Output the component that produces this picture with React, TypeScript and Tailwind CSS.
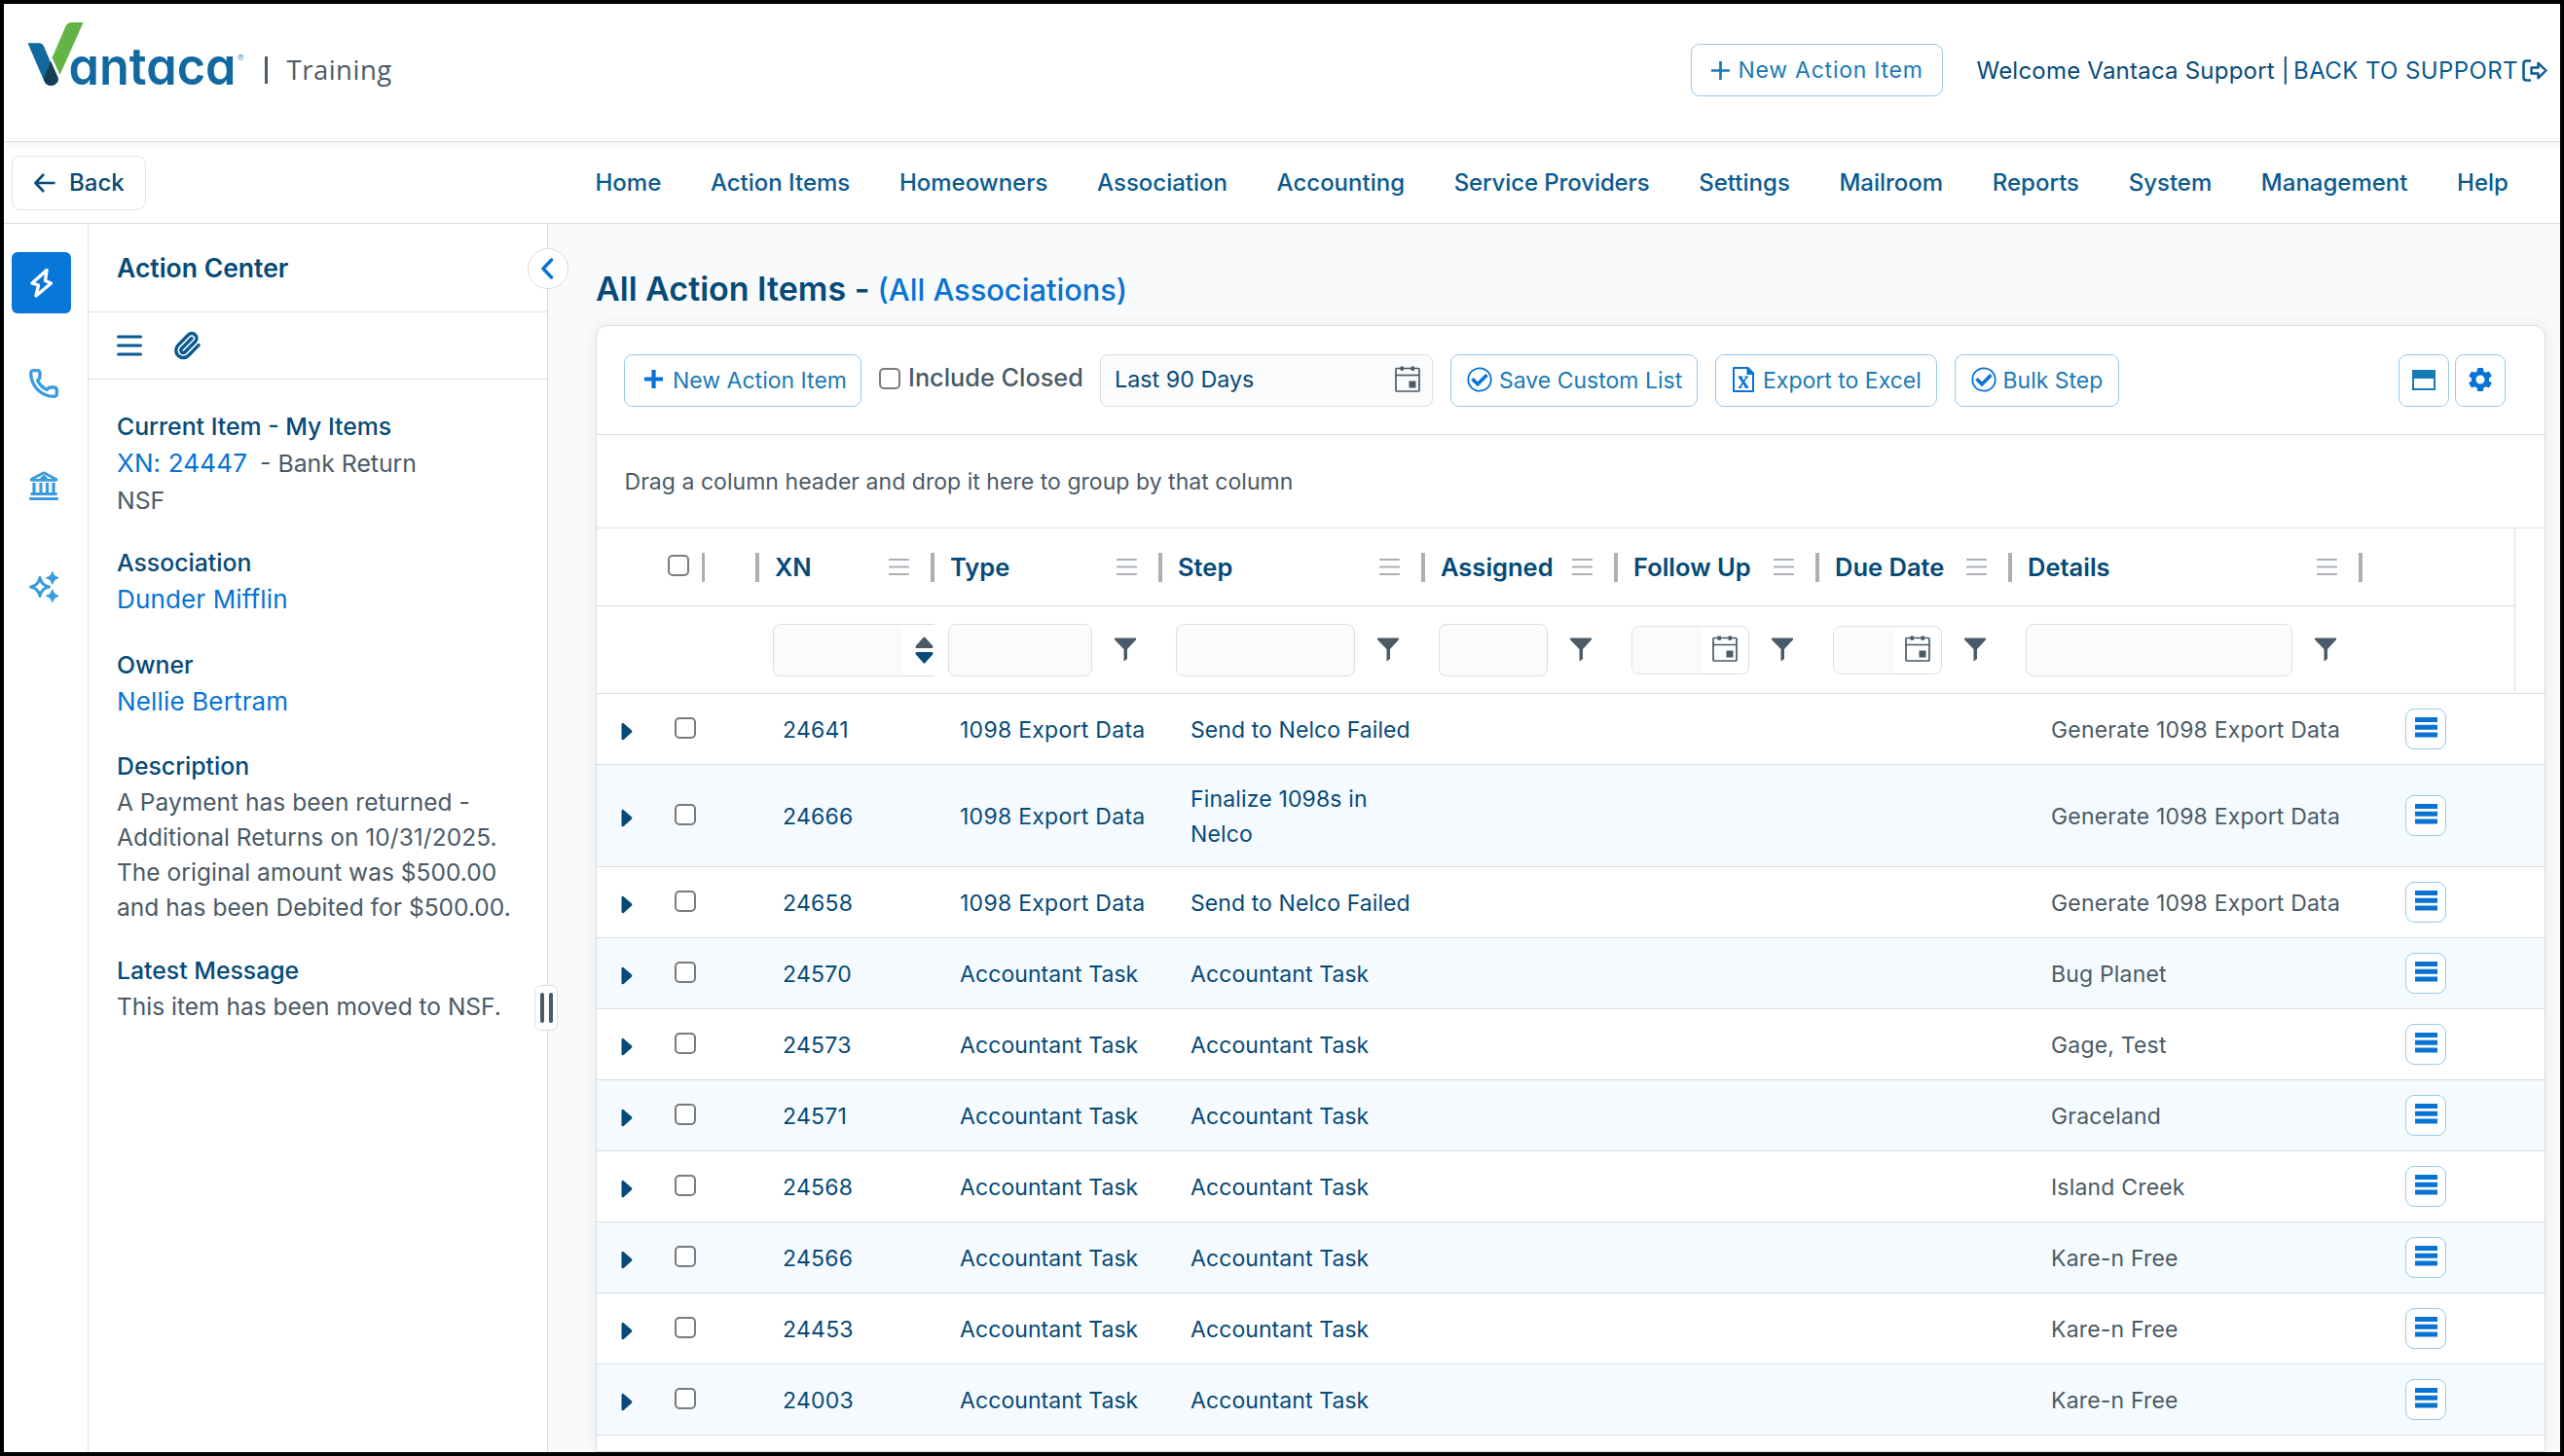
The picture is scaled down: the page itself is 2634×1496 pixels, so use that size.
import React from "react";
import { Paperclip, Phone } from "lucide-react";
import { MdSettings } from "react-icons/md";

const navItems = [
  "Home", "Action Items", "Homeowners", "Association", "Accounting", "Service Providers",
  "Settings", "Mailroom", "Reports", "System", "Management", "Help",
];

type Row = { xn: string; type: string; step: string; details: string };

const rows: Row[] = [
  { xn: "24641", type: "1098 Export Data", step: "Send to Nelco Failed", details: "Generate 1098 Export Data" },
  { xn: "24666", type: "1098 Export Data", step: "Finalize 1098s in Nelco", details: "Generate 1098 Export Data" },
  { xn: "24658", type: "1098 Export Data", step: "Send to Nelco Failed", details: "Generate 1098 Export Data" },
  { xn: "24570", type: "Accountant Task", step: "Accountant Task", details: "Bug Planet" },
  { xn: "24573", type: "Accountant Task", step: "Accountant Task", details: "Gage, Test" },
  { xn: "24571", type: "Accountant Task", step: "Accountant Task", details: "Graceland" },
  { xn: "24568", type: "Accountant Task", step: "Accountant Task", details: "Island Creek" },
  { xn: "24566", type: "Accountant Task", step: "Accountant Task", details: "Kare-n Free" },
  { xn: "24453", type: "Accountant Task", step: "Accountant Task", details: "Kare-n Free" },
  { xn: "24003", type: "Accountant Task", step: "Accountant Task", details: "Kare-n Free" },
];

const gridCols = "grid grid-cols-[111px_56px_180px_234px_270px_198px_207px_198px_360px_1fr]";

function Logo() {
  return (
    <svg width="232" height="100" viewBox="20 22 232 100" className="shrink-0">
      <path d="M28.500 44.300H40.500Q43.600 44.300 44.800 47L60 83Q57.500 88 52.200 88Q47 88 45 82.500Z" fill="#11699f" />
      <path d="M52.300 63L60 80.500Q58 88 52.200 88Q44.500 87 45.200 79.500Z" fill="#163d50" />
      <path d="M73.500 23H85.600L61.600 76.800L53.500 59.500L67.500 27Q69.500 23 73.500 23Z" fill="#64b346" />
      <path d="M52.800 60.500L61 78" stroke="#fff" strokeWidth="1" />
      <text x="70.500" y="87.300" textLength="172" lengthAdjust="spacingAndGlyphs" fill="#11699f" className="font-['Inter'] text-[53px] font-semibold [font-feature-settings:'cv11']">antaca</text>
      <text x="244" y="62.500" fill="#5d9bc4" className="font-['Inter'] text-[9.500px]">®</text>
    </svg>
  );
}

function Plus({ size, stroke }: { size: number; stroke: number }) {
  return (
    <svg width={size} height={size} viewBox="0 0 18 18" className="shrink-0">
      <path d="M9 0V18M0 9H18" stroke="currentColor" strokeWidth={stroke} />
    </svg>
  );
}

function CheckCircle() {
  return (
    <svg width="26" height="26" viewBox="0 0 26 26" className="-mt-0.5 shrink-0 text-[#0873d3]" fill="none">
      <circle cx="13" cy="13" r="11.700" stroke="currentColor" strokeWidth="1.800" />
      <path d="M5.500 12.200L11 17.700L20.500 8.200" stroke="currentColor" strokeWidth="3.600" />
    </svg>
  );
}

function ExcelIcon() {
  return (
    <svg width="22" height="26" viewBox="0 0 22 26" className="-mt-0.5 shrink-0 text-[#0873d3]" fill="none">
      <path d="M15 1H1V25H21V7Z" stroke="currentColor" strokeWidth="2" strokeLinejoin="round" />
      <path d="M14.500 0H16L22 6V8H14.500Z" fill="currentColor" />
      <path d="M7.300 10.200L14.700 21" stroke="currentColor" strokeWidth="2.800" />
      <path d="M14.700 10.200L7.300 21M5.800 10.200H9.800M12.500 10.200H16M5.800 21H9.500M12.300 21H16.300" stroke="currentColor" strokeWidth="1.500" />
    </svg>
  );
}

function CalendarIcon() {
  return (
    <svg width="26" height="27" viewBox="0 0 26 27" className="-mt-0.5 shrink-0 text-[#4a5a66]" fill="none">
      <rect x="1" y="2.500" width="24" height="23.500" rx="1" stroke="currentColor" strokeWidth="1.700" />
      <path d="M1 9.500H25" stroke="currentColor" strokeWidth="1.700" />
      <path d="M5.500 0.500H9V4.700H5.500ZM16.500 0.500H20V4.700H16.500ZM14.500 15.500H21.500V22.500H14.500Z" fill="currentColor" />
    </svg>
  );
}

function Funnel() {
  return (
    <svg width="22" height="25" viewBox="0 0 22 25" className="shrink-0" fill="#4a5a66">
      <path d="M0 0.500H22V2.200L13 12V22L9.500 24.500V12L0 2.200Z" />
    </svg>
  );
}

function HeaderMenu() {
  return (
    <svg width="21" height="19" viewBox="0 0 21 19" className="shrink-0">
      <path d="M1 2H20M1 9.500H20M1 17H20" stroke="#a7b0b7" strokeWidth="2.200" strokeLinecap="round" />
    </svg>
  );
}

function Checkbox() {
  return <span className="block size-[22px] shrink-0 rounded-[5px] border-2 border-[#7b7b7b] bg-white" />;
}

function OutlineButton({ className, children }: { className: string; children: React.ReactNode }) {
  return (
    <button className={"flex h-[54px] shrink-0 items-center whitespace-nowrap rounded-[9px] border border-[#97caec] bg-white text-[#1a7ab6] " + className}>
      {children}
    </button>
  );
}

function ColumnHeader({ label }: { label: string }) {
  return (
    <div className="flex items-center pl-4">
      <span className="flex-1 whitespace-nowrap pt-0.5 text-[25.500px] font-semibold text-[#064a78]">{label}</span>
      <HeaderMenu />
      <span className="ml-[22px] h-[30px] w-1 bg-[#a9b1b8]" />
    </div>
  );
}

function TextFilter() {
  return (
    <div className="flex items-center pl-[14px]">
      <span className="h-[54px] flex-1 rounded-lg border border-[#dadee3] bg-[#fafbfd]" />
      <span className="ml-[23px] mr-[27px]"><Funnel /></span>
    </div>
  );
}

function DateFilter() {
  return (
    <div className="flex items-center pl-[14px]">
      <span className="flex h-[50px] flex-1 overflow-hidden rounded-lg border border-[#dadee3] bg-white">
        <span className="flex-1 bg-[#fafbfd]" />
        <span className="flex w-12 items-center justify-center"><CalendarIcon /></span>
      </span>
      <span className="ml-[23px] mr-[27px]"><Funnel /></span>
    </div>
  );
}

function GridRow({ row, index }: { row: Row; index: number }) {
  const tall = index === 1;
  return (
    <div className={gridCols + " shrink-0 items-center border-b border-[#d9dee3] text-[23px] leading-9 text-[#064a78] " + (tall ? "h-[105px] " : "h-[73px] ") + (index % 2 ? "bg-[#f5fafe]" : "bg-white")}>
      <div className="flex items-center pl-[25px]">
        <svg width="12" height="19" viewBox="0 0 12 19" className="mt-1 shrink-0">
          <path d="M0.500 2Q1.500 0 3 1.500L11 8.500Q11.800 9.500 11 10.500L3 17.800Q1.500 19 0.500 17.500Z" fill="#064a78" />
        </svg>
        <span className="-mt-[3px] ml-[43px]"><Checkbox /></span>
      </div>
      <div />
      <div className="pl-6 pt-px tracking-[0.250px]">{row.xn}</div>
      <div className={"whitespace-nowrap pl-[26px] pt-px " + (index < 3 ? "tracking-[0.270px]" : "tracking-[0.080px]")}>{row.type}</div>
      <div className={"pl-[29px] pt-px " + (index === 1 ? "pr-[41px] tracking-[0.150px]" : "whitespace-nowrap tracking-[0.080px]")}>{row.step}</div>
      <div />
      <div />
      <div />
      <div className="whitespace-nowrap pl-10 pt-px tracking-[0.180px] text-[#4a5a66]">{row.details}</div>
      <div className="pl-11">
        <button className="flex size-[42px] items-start justify-center rounded-[9px] border border-[#97caec] bg-white pt-[7px]">
          <svg width="23" height="22" viewBox="0 0 23 22">
            <path d="M0 3.500H23M0 11.200H23M0 19H23" stroke="#0873d3" strokeWidth="5" />
          </svg>
        </button>
      </div>
    </div>
  );
}

export default function App() {
  return (
    <div className="flex h-[1496px] w-[2634px] flex-col overflow-hidden border-4 border-black bg-white font-['Inter',sans-serif] text-[#4a5a66]">
      <header className="flex h-[142px] shrink-0 items-center border-b border-[#d6dce1] pb-[5px] pl-4 pr-[13px]">
        <Logo />
        <span className="ml-5 h-7 w-[2.500px] bg-[#4a5a66]" />
        <span className="ml-[20px] font-['Open_Sans',sans-serif] text-[27.500px] leading-none tracking-[0.500px]">Training</span>
        <OutlineButton className="ml-auto w-[259px] pl-5 text-[23px] tracking-[0.750px]">
          <Plus size={19} stroke={2.600} />
          <span className="ml-2">New Action Item</span>
        </OutlineButton>
        <span className="ml-[34px] whitespace-nowrap pt-px text-[24px] tracking-[0.220px] text-[#064a78]">Welcome Vantaca Support |</span>
        <span className="ml-1 whitespace-nowrap pt-px text-[24px] tracking-[0.400px] text-[#0b5a8f]">BACK TO SUPPORT</span>
        <svg width="26" height="23" viewBox="0 0 26 23" className="ml-1 shrink-0 text-[#0b5a8f]" fill="none">
          <path d="M9 1.500H4.500Q1.500 1.500 1.500 4.500V18.500Q1.500 21.500 4.500 21.500H9" stroke="currentColor" strokeWidth="2.600" />
          <path d="M9.500 8.500H16.500V3.800L24.500 11.500L16.500 19.200V14.500H9.500Z" stroke="currentColor" strokeWidth="2.400" strokeLinejoin="round" />
        </svg>
      </header>

      <nav className="flex h-[84px] shrink-0 items-center border-b border-[#d6dce1] bg-linear-to-b from-[#f6f9fc] to-white to-[12px] pl-2 pr-[53px]">
        <button className="flex h-[56px] w-[138px] shrink-0 items-center rounded-[9px] border border-[#dbe5ec] bg-white pl-[22px] text-[24px] font-medium text-[#064a78]">
          <svg width="22" height="20" viewBox="0 0 22 20" fill="none">
            <path d="M10 1L1.500 10L10 19M1.500 10H21.500" stroke="currentColor" strokeWidth="2.600" strokeLinejoin="round" />
          </svg>
          <span className="ml-[14px]">Back</span>
        </button>
        <div className="ml-[461.500px] flex flex-1 items-center justify-between whitespace-nowrap text-[24px] font-medium text-[#0b5a8f]">
          {navItems.map((item) => (
            <a key={item} className={item === "Service Providers" ? "tracking-[-0.100px]" : ""}>{item}</a>
          ))}
        </div>
      </nav>

      <div className="flex min-h-0 flex-1">
        <aside className="flex w-[87px] shrink-0 flex-col border-r border-[#dcdfe3] pl-2 pt-[29px] text-[#3a9bdc]">
          <div className="flex h-[63px] w-[61px] items-center justify-center rounded-md bg-[#0877da]">
            <svg width="26" height="32" viewBox="0 0 26 32" fill="none">
              <path d="M18 2.500L3 16L9.500 18L7 29L22.500 16L16.500 13.500Z" stroke="#fff" strokeWidth="3.400" strokeLinejoin="round" />
            </svg>
          </div>
          <div className="mt-[56px] flex w-[65px] flex-col items-center">
            <Phone size={32} strokeWidth={2.500} />
            <svg width="30" height="32" viewBox="0 0 30 32" fill="none" className="mt-[73px]">
              <path d="M2.200 9.500L15 2.800L27.800 9.500V10.300H2.200Z" stroke="currentColor" strokeWidth="2.800" strokeLinejoin="round" />
              <path d="M12 8.500L15 5.500L18 8.500Z" fill="currentColor" stroke="currentColor" strokeWidth="1.500" />
              <path d="M5 13V25M12 13V25M18.500 13V25M25 13V25" stroke="currentColor" strokeWidth="3.200" />
              <path d="M2.500 24.500H27.500M1 29.500H29" stroke="currentColor" strokeWidth="2.800" strokeLinecap="round" />
            </svg>
            <svg width="30" height="32" viewBox="0 0 30 32" fill="none" className="mt-[72px]">
              <path d="M11 6.500Q12.500 14.500 20.500 16Q12.500 17.500 11 25.500Q9.500 17.500 1.500 16Q9.500 14.500 11 6.500Z" stroke="currentColor" strokeWidth="3" strokeLinejoin="round" />
              <path d="M23.800 1Q24.800 5.800 29.600 6.800Q24.800 7.800 23.800 12.600Q22.800 7.800 18 6.800Q22.800 5.800 23.800 1ZM23.800 19.500Q24.800 24.300 29.600 25.300Q24.800 26.300 23.800 31.100Q22.800 26.300 18 25.300Q22.800 24.300 23.800 19.500Z" fill="currentColor" stroke="currentColor" strokeWidth="1.600" strokeLinejoin="round" />
            </svg>
          </div>
        </aside>

        <section className="relative flex w-[472px] shrink-0 flex-col border-r border-[#d6dade]">
          <div className="flex h-[91px] items-center border-b border-[#dcdfe3] pl-[29px] pt-0.5 text-[26.500px] font-semibold text-[#064a78]">Action Center</div>
          <div className="flex h-[69px] items-center border-b border-[#dcdfe3] pl-[29px] text-[#0b5a8f]">
            <svg width="26" height="22" viewBox="0 0 26 22">
              <path d="M1.500 2H24.500M1.500 11H24.500M1.500 20H24.500" stroke="currentColor" strokeWidth="3" strokeLinecap="round" />
            </svg>
            <Paperclip size={30} strokeWidth={2.700} className="ml-[31px]" />
          </div>
          <div className="flex flex-col pl-[29px] pt-[29.500px] text-[24.800px] leading-[38px]">
            <h3 className="font-medium leading-[37px] text-[#064a78]">Current Item - My Items</h3>
            <p className="w-[330px]"><span className="text-[26px] tracking-[0.150px] text-[#0873d3]">XN: 24447</span><span className="ml-[13px]">- Bank Return</span><br />NSF</p>
            <h3 className="mt-[27px] font-medium leading-[37px] text-[#064a78]">Association</h3>
            <p className="text-[26px] tracking-[0.150px] text-[#0873d3]">Dunder Mifflin</p>
            <h3 className="mt-[30px] font-medium leading-[37px] text-[#064a78]">Owner</h3>
            <p className="text-[26px] tracking-[0.150px] text-[#0873d3]">Nellie Bertram</p>
            <h3 className="mt-[29px] font-medium leading-[37px] text-[#064a78]">Description</h3>
            <p className="w-[420px] text-[24.500px] leading-9 tracking-[0.030px]">
              A Payment has been returned - Additional Returns on 10/31/2025. The original amount was $500.00 and has been Debited for $500.00.
            </p>
            <h3 className="mt-[29px] font-medium leading-[37px] text-[#064a78]">Latest Message</h3>
            <p className="whitespace-nowrap text-[24.500px] leading-9">This item has been moved to NSF.</p>
          </div>
          <button className="absolute -right-[22px] top-[25px] z-10 flex size-[42px] items-center justify-center rounded-full border border-[#d9dde1] bg-white pr-0.5">
            <svg width="14" height="22" viewBox="0 0 14 22" fill="none">
              <path d="M11.500 2L3 11L11.500 20" stroke="#0873d3" strokeWidth="3.400" strokeLinecap="round" strokeLinejoin="round" />
            </svg>
          </button>
          <div className="absolute -right-[11px] top-[782px] z-10 flex h-[47px] w-6 items-center justify-center gap-[5px] rounded-[7px] border border-[#d9dde1] bg-white">
            <span className="h-[31px] w-1 rounded-full bg-[#4a5a66]" />
            <span className="h-[31px] w-1 rounded-full bg-[#4a5a66]" />
          </div>
        </section>

        <main className="flex min-w-0 flex-1 flex-col bg-[#f8fafc] pl-[49px] pr-[15px]">
          <h1 className="flex h-[104px] shrink-0 items-baseline pt-[46px] text-[34px] font-semibold leading-[42px] text-[#064a78]">
            All Action Items -<span className="ml-2 text-[30.800px] font-medium text-[#0873d3]">(All Associations)</span>
          </h1>
          <div className="flex h-[1170px] flex-col rounded-t-[12px] border border-[#d9dde2] bg-white shadow-[0_0_16px_rgba(0,0,0,0.07)]">
            <div className="flex h-[112px] shrink-0 items-center border-b border-[#d9dde2] pl-7 pr-[40px] text-[23px]">
              <OutlineButton className="w-[244px] pl-5">
                <span className="-mt-0.5 text-[#0873d3]"><Plus size={19} stroke={4} /></span>
                <span className="ml-2.5 pt-px">New Action Item</span>
              </OutlineButton>
              <span className="-mt-1 ml-[18px]"><Checkbox /></span>
              <span className="-mt-[5px] ml-2 w-[197px] whitespace-nowrap text-[25.300px] font-medium">Include Closed</span>
              <div className="flex h-[54px] w-[342px] shrink-0 items-center justify-between rounded-lg border border-[#dadee3] bg-[#fafbfd] pl-[14px] pr-3 text-[23.300px] text-[#064a78]">
                Last 90 Days
                <CalendarIcon />
              </div>
              <OutlineButton className="ml-[18px] w-[254px] pl-4"><CheckCircle /><span className="ml-[7px] pt-px">Save Custom List</span></OutlineButton>
              <OutlineButton className="ml-[18px] w-[228px] pl-[17px]"><ExcelIcon /><span className="ml-[9px] pt-px">Export to Excel</span></OutlineButton>
              <OutlineButton className="ml-[18px] w-[169px] pl-4"><CheckCircle /><span className="ml-[6.500px] pt-px">Bulk Step</span></OutlineButton>
              <OutlineButton className="ml-auto w-[52px] justify-center">
                <svg width="24" height="21" viewBox="0 0 24 21" fill="none">
                  <rect x="1" y="1" width="22" height="19" stroke="currentColor" strokeWidth="2" />
                  <path d="M0 0H24V9H0Z" fill="currentColor" />
                </svg>
              </OutlineButton>
              <OutlineButton className="ml-1.5 w-[52px] justify-center"><MdSettings size={30} className="-mt-px text-[#0873d3]" /></OutlineButton>
            </div>
            <div className="flex h-[96px] shrink-0 items-center border-b border-[#d9dde2] pl-[28.500px] pt-0.5 text-[23px] tracking-[0.040px]">
              Drag a column header and drop it here to group by that column
            </div>

            <div className="flex h-[170px] shrink-0 border-b border-[#d9dde2]">
              <div className="flex w-[1971px] flex-col border-r border-[#d9dde2]">
                <div className={gridCols + " h-20 items-center border-b border-[#d9dde2]"}>
                  <div className="flex items-center justify-end">
                    <span className="-mt-[3px] mr-[13px]"><Checkbox /></span>
                    <span className="h-[30px] w-[3px] bg-[#a9b1b8]" />
                  </div>
                  <div className="flex justify-end"><span className="h-[30px] w-1 bg-[#a9b1b8]" /></div>
                  <ColumnHeader label="XN" />
                  <ColumnHeader label="Type" />
                  <ColumnHeader label="Step" />
                  <ColumnHeader label="Assigned" />
                  <ColumnHeader label="Follow Up" />
                  <ColumnHeader label="Due Date" />
                  <ColumnHeader label="Details" />
                  <div />
                </div>
                <div className={gridCols + " h-[89px] items-center"}>
                  <div />
                  <div />
                  <div className="pl-[14px]">
                    <div className="flex h-[54px] items-center overflow-hidden rounded-l-lg border border-r-0 border-[#dadee3]">
                      <span className="h-full flex-1 bg-[#fafbfd]" />
                      <span className="flex w-[34px] justify-end pr-px">
                        <svg width="19" height="28" viewBox="0 0 19 28">
                          <path d="M8.500 1Q9.500 0 10.500 1L18.500 10Q18.500 12 17.500 12H1.500Q0.500 12 0.500 10Z" fill="#4a5a66" />
                          <path d="M8.500 27Q9.500 28 10.500 27L18.500 18Q18.500 16 17.500 16H1.500Q0.500 16 0.500 18Z" fill="#064a78" />
                        </svg>
                      </span>
                    </div>
                  </div>
                  <TextFilter />
                  <TextFilter />
                  <TextFilter />
                  <DateFilter />
                  <DateFilter />
                  <TextFilter />
                  <div />
                </div>
              </div>
            </div>

            {rows.map((row, i) => <GridRow key={row.xn} row={row} index={i} />)}
          </div>
        </main>
      </div>
    </div>
  );
}
